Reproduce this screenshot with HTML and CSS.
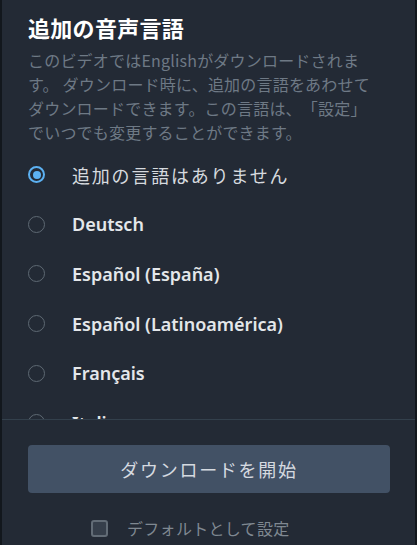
FILE: index.html
```html
<!DOCTYPE html>
<html lang="ja">
<head>
<meta charset="utf-8">
<link rel="stylesheet" href="styles.css">
</head>
<body>
<div class="sheet">
  <div class="scroll">
    <h1 class="title">追加の音声言語</h1>
    <p class="desc">このビデオではEnglishがダウンロードされます。 ダウンロード時に、追加の言語をあわせてダウンロードできます。この言語は、「設定」でいつでも変更することができます。</p>
    <ul class="options">
      <li class="option selected"><span class="radio"></span><span class="label ja">追加の言語はありません</span></li>
      <li class="option"><span class="radio"></span><span class="label">Deutsch</span></li>
      <li class="option"><span class="radio"></span><span class="label">Español (España)</span></li>
      <li class="option"><span class="radio"></span><span class="label">Español (Latinoamérica)</span></li>
      <li class="option"><span class="radio"></span><span class="label">Français</span></li>
      <li class="option"><span class="radio"></span><span class="label">Italiano</span></li>
    </ul>
  </div>
  <div class="footer">
    <button class="start">ダウンロードを開始</button>
    <label class="default"><span class="check"></span><span class="default-text">デフォルトとして設定</span></label>
  </div>
</div>
</body>
</html>
```

FILE: styles.css
```css
html, body {
  margin: 0;
  padding: 0;
  background: #232a35;
}
body {
  font-family: "Noto Sans", "Noto Sans CJK JP", sans-serif;
  text-spacing-trim: space-all;
}
.sheet {
  height: 545px;
  box-sizing: border-box;
  border-left: 2px solid #12171d;
  border-right: 2px solid #12171d;
  display: flex;
  flex-direction: column;
  overflow: hidden;
}
.scroll {
  height: 419px;
  flex: none;
  overflow: hidden;
  padding: 0 24px 0 26px;
  box-sizing: border-box;
}
.title {
  margin: 0;
  padding-top: 12px;
  font-size: 22px;
  line-height: 30px;
  font-weight: 700;
  color: #ffffff;
  font-family: "Noto Sans CJK JP", sans-serif;
  letter-spacing: 0.3px;
}
.desc {
  margin: 6px 0 0;
  max-width: 350px;
  font-size: 16px;
  line-height: 24px;
  color: #6e7985;
  font-family: "Noto Sans CJK JP", sans-serif;
  letter-spacing: 0.2px;
}
.options {
  list-style: none;
  margin: 6px 0 0;
  padding: 0;
}
.option {
  height: 49.6px;
  display: flex;
  align-items: center;
  gap: 27px;
}
.radio {
  width: 17px;
  height: 17px;
  box-sizing: border-box;
  border: 1.5px solid #5e6973;
  border-radius: 50%;
  flex: none;
  position: relative;
}
.selected .radio {
  border: 2px solid #5cb1f2;
}
.selected .radio::after {
  content: "";
  position: absolute;
  left: 2.5px;
  top: 2.5px;
  width: 8px;
  height: 8px;
  border-radius: 50%;
  background: #5cb1f2;
}
.label {
  font-size: 18px;
  font-weight: 600;
  color: #e4e7ea;
}
.label.ja {
  font-family: "Noto Sans CJK JP", sans-serif;
  font-weight: 400;
  letter-spacing: 1.8px;
  color: #d6dadf;
}
.footer {
  flex: 1;
  border-top: 1px solid #33404c;
  padding: 25px 25px 0 26px;
  display: flex;
  flex-direction: column;
}
.start {
  height: 48px;
  border: none;
  border-radius: 4px;
  background: #425165;
  color: #d5dae0;
  font-family: "Noto Sans CJK JP", sans-serif;
  font-size: 18px;
  letter-spacing: 1.7px;
  padding: 0;
  cursor: pointer;
}
.default {
  margin-top: 24px;
  margin-left: 63px;
  display: flex;
  align-items: center;
  gap: 19px;
  line-height: 22px;
}
.check {
  width: 17px;
  height: 17px;
  box-sizing: border-box;
  border: 2px solid #626c76;
  border-radius: 3px;
  background: #363f4b;
  flex: none;
}
.default-text {
  font-family: "Noto Sans CJK JP", sans-serif;
  font-size: 16px;
  color: #7f8891;
  letter-spacing: 0.3px;
}
```
